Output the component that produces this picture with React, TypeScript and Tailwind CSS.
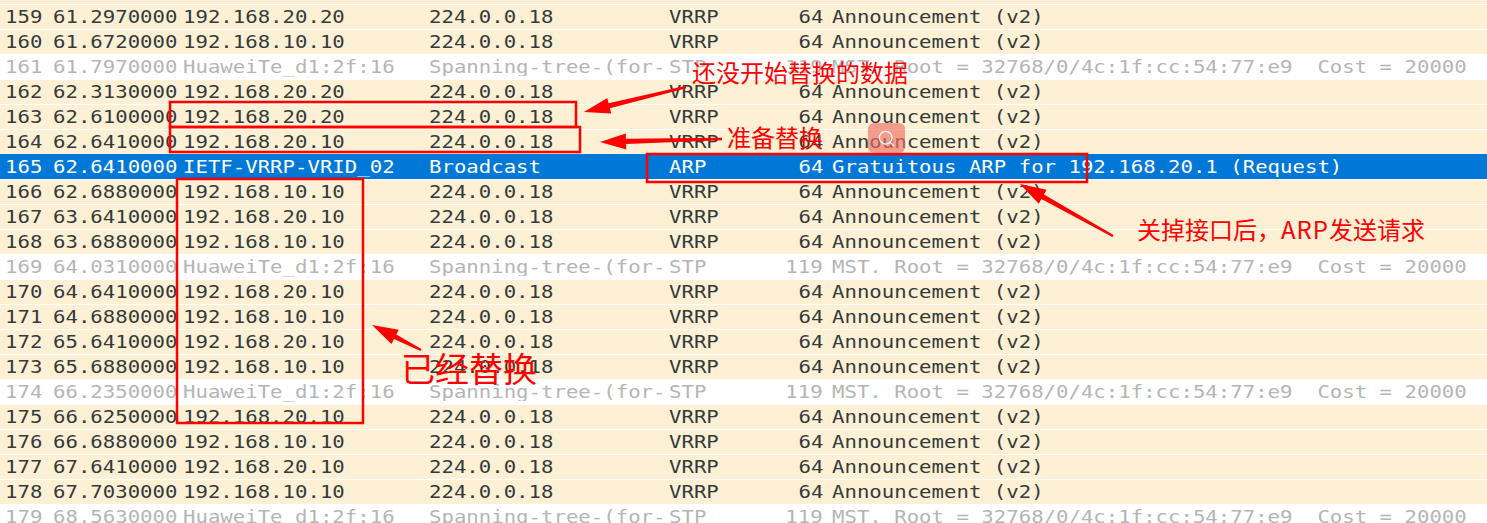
import { Search } from 'lucide-react'

type Kind = 'vrrp' | 'stp' | 'arp'

type Packet = {
  no: number
  time: string
  src: string
  dst: string
  proto: string
  len: number
  info: string
  kind: Kind
}

const STP_INFO = 'MST. Root = 32768/0/4c:1f:cc:54:77:e9  Cost = 20000'

const vrrp = (no: number, time: string, src: string): Packet => ({
  no,
  time,
  src,
  dst: '224.0.0.18',
  proto: 'VRRP',
  len: 64,
  info: 'Announcement (v2)',
  kind: 'vrrp',
})

const stp = (no: number, time: string): Packet => ({
  no,
  time,
  src: 'HuaweiTe_d1:2f:16',
  dst: 'Spanning-tree-(for-bridges)_00',
  proto: 'STP',
  len: 119,
  info: STP_INFO,
  kind: 'stp',
})

const PACKETS: Packet[] = [
  vrrp(159, '61.2970000', '192.168.20.20'),
  vrrp(160, '61.6720000', '192.168.10.10'),
  stp(161, '61.7970000'),
  vrrp(162, '62.3130000', '192.168.20.20'),
  vrrp(163, '62.6100000', '192.168.20.20'),
  vrrp(164, '62.6410000', '192.168.20.10'),
  {
    no: 165,
    time: '62.6410000',
    src: 'IETF-VRRP-VRID_02',
    dst: 'Broadcast',
    proto: 'ARP',
    len: 64,
    info: 'Gratuitous ARP for 192.168.20.1 (Request)',
    kind: 'arp',
  },
  vrrp(166, '62.6880000', '192.168.10.10'),
  vrrp(167, '63.6410000', '192.168.20.10'),
  vrrp(168, '63.6880000', '192.168.10.10'),
  stp(169, '64.0310000'),
  vrrp(170, '64.6410000', '192.168.20.10'),
  vrrp(171, '64.6880000', '192.168.10.10'),
  vrrp(172, '65.6410000', '192.168.20.10'),
  vrrp(173, '65.6880000', '192.168.10.10'),
  stp(174, '66.2350000'),
  vrrp(175, '66.6250000', '192.168.20.10'),
  vrrp(176, '66.6880000', '192.168.10.10'),
  vrrp(177, '67.6410000', '192.168.20.10'),
  vrrp(178, '67.7030000', '192.168.10.10'),
  stp(179, '68.5630000'),
]

const ROW_STYLE: Record<Kind, string> = {
  vrrp: 'bg-[#fdf0d5] text-[#333b3b] border-white',
  stp: 'bg-white text-[#b5b5b5] border-white',
  arp: 'bg-[#0078d7] text-white border-[#0078d7]',
}

// the capture was stretched sideways, so glyphs get widened instead of spaced
const Txt = ({ children, right }: { children: React.ReactNode; right?: boolean }) => (
  <span className={right ? 'inline-block origin-right scale-x-[1.216]' : 'inline-block origin-left scale-x-[1.216]'}>
    {children}
  </span>
)

const PacketRow = ({ p }: { p: Packet }) => (
  <div className={`flex h-[25px] shrink-0 items-center border-t whitespace-pre ${ROW_STYLE[p.kind]}`}>
    <div className="w-[53px] shrink-0 pl-[5px]">
      <Txt>{p.no}</Txt>
    </div>
    <div className="w-[130px] shrink-0">
      <Txt>{p.time}</Txt>
    </div>
    <div className="w-[246px] shrink-0">
      <Txt>{p.src}</Txt>
    </div>
    <div className="w-[240px] shrink-0">
      <div className="w-[237px] overflow-hidden">
        <Txt>{p.dst}</Txt>
      </div>
    </div>
    <div className="w-[100px] shrink-0">
      <Txt>{p.proto}</Txt>
    </div>
    <div className="w-[54px] shrink-0 text-right">
      <Txt right>{p.len}</Txt>
    </div>
    <div className="flex-1 pl-[9px]">
      <Txt>{p.info}</Txt>
    </div>
  </div>
)

function arrowPoints(x1: number, y1: number, x2: number, y2: number, headLen = 26, headHalf = 8, tail = 1.2, neck = 2.6) {
  const dx = x2 - x1
  const dy = y2 - y1
  const d = Math.hypot(dx, dy)
  const ux = dx / d
  const uy = dy / d
  const nx = -uy
  const ny = ux
  const bx = x2 - ux * headLen
  const by = y2 - uy * headLen
  const pts = [
    [x1 + nx * tail, y1 + ny * tail],
    [bx + nx * neck, by + ny * neck],
    [bx + nx * headHalf, by + ny * headHalf],
    [x2, y2],
    [bx - nx * headHalf, by - ny * headHalf],
    [bx - nx * neck, by - ny * neck],
    [x1 - nx * tail, y1 - ny * tail],
  ]
  return pts.map(([x, y]) => `${x.toFixed(1)},${y.toFixed(1)}`).join(' ')
}

const BOXES = [
  { x: 170, y: 102, w: 406, h: 25 },
  { x: 170, y: 127, w: 410, h: 25 },
  { x: 647, y: 154, w: 440, h: 28 },
  { x: 177, y: 179, w: 186, h: 244 },
]

const ARROWS: [number, number, number, number][] = [
  [686, 87, 584, 112],
  [722, 139, 600, 142],
  [1113, 236, 1020, 184],
  [421, 350, 372, 325],
]

const labelFont = "font-['Noto_Sans_CJK_SC','Noto_Sans',sans-serif] leading-none text-[#ff0000] whitespace-nowrap"

export default function App() {
  return (
    <div className="relative h-[523px] w-[1487px] overflow-hidden bg-white font-['DejaVu_Sans_Mono',monospace] text-[17px] leading-none">
      <div className="flex flex-col">
        <div className="h-[4px] shrink-0 bg-[#fdf0d5]" />
        {PACKETS.map((p) => (
          <PacketRow key={p.no} p={p} />
        ))}
      </div>

      {/* annotation layer */}
      <svg className="pointer-events-none absolute inset-0" width={1487} height={523}>
        {BOXES.map((b, i) => (
          <rect key={i} x={b.x} y={b.y} width={b.w} height={b.h} fill="none" stroke="#ff0000" strokeWidth={2.5} />
        ))}
        {ARROWS.map(([x1, y1, x2, y2], i) => (
          <polygon key={i} points={arrowPoints(x1, y1, x2, y2)} fill="#ff0000" />
        ))}
      </svg>

      <span className={`absolute left-[692px] top-[60px] text-[24px] ${labelFont}`}>还没开始替换的数据</span>
      <span className={`absolute left-[727px] top-[125px] text-[24px] ${labelFont}`}>准备替换</span>
      <span className={`absolute left-[1137px] top-[217px] text-[24px] ${labelFont}`}>
        关掉接口后，<span className="tracking-[1px]">ARP</span>发送请求
      </span>
      <span className={`absolute left-[401px] top-[351px] text-[34px] ${labelFont}`}>已经替换</span>

      <div className="absolute left-[868px] top-[123px] flex h-[30px] w-[37px] items-center justify-center rounded-md bg-[#f06e64]/65">
        <Search size={19} strokeWidth={1.6} className="text-white" />
      </div>
    </div>
  )
}
